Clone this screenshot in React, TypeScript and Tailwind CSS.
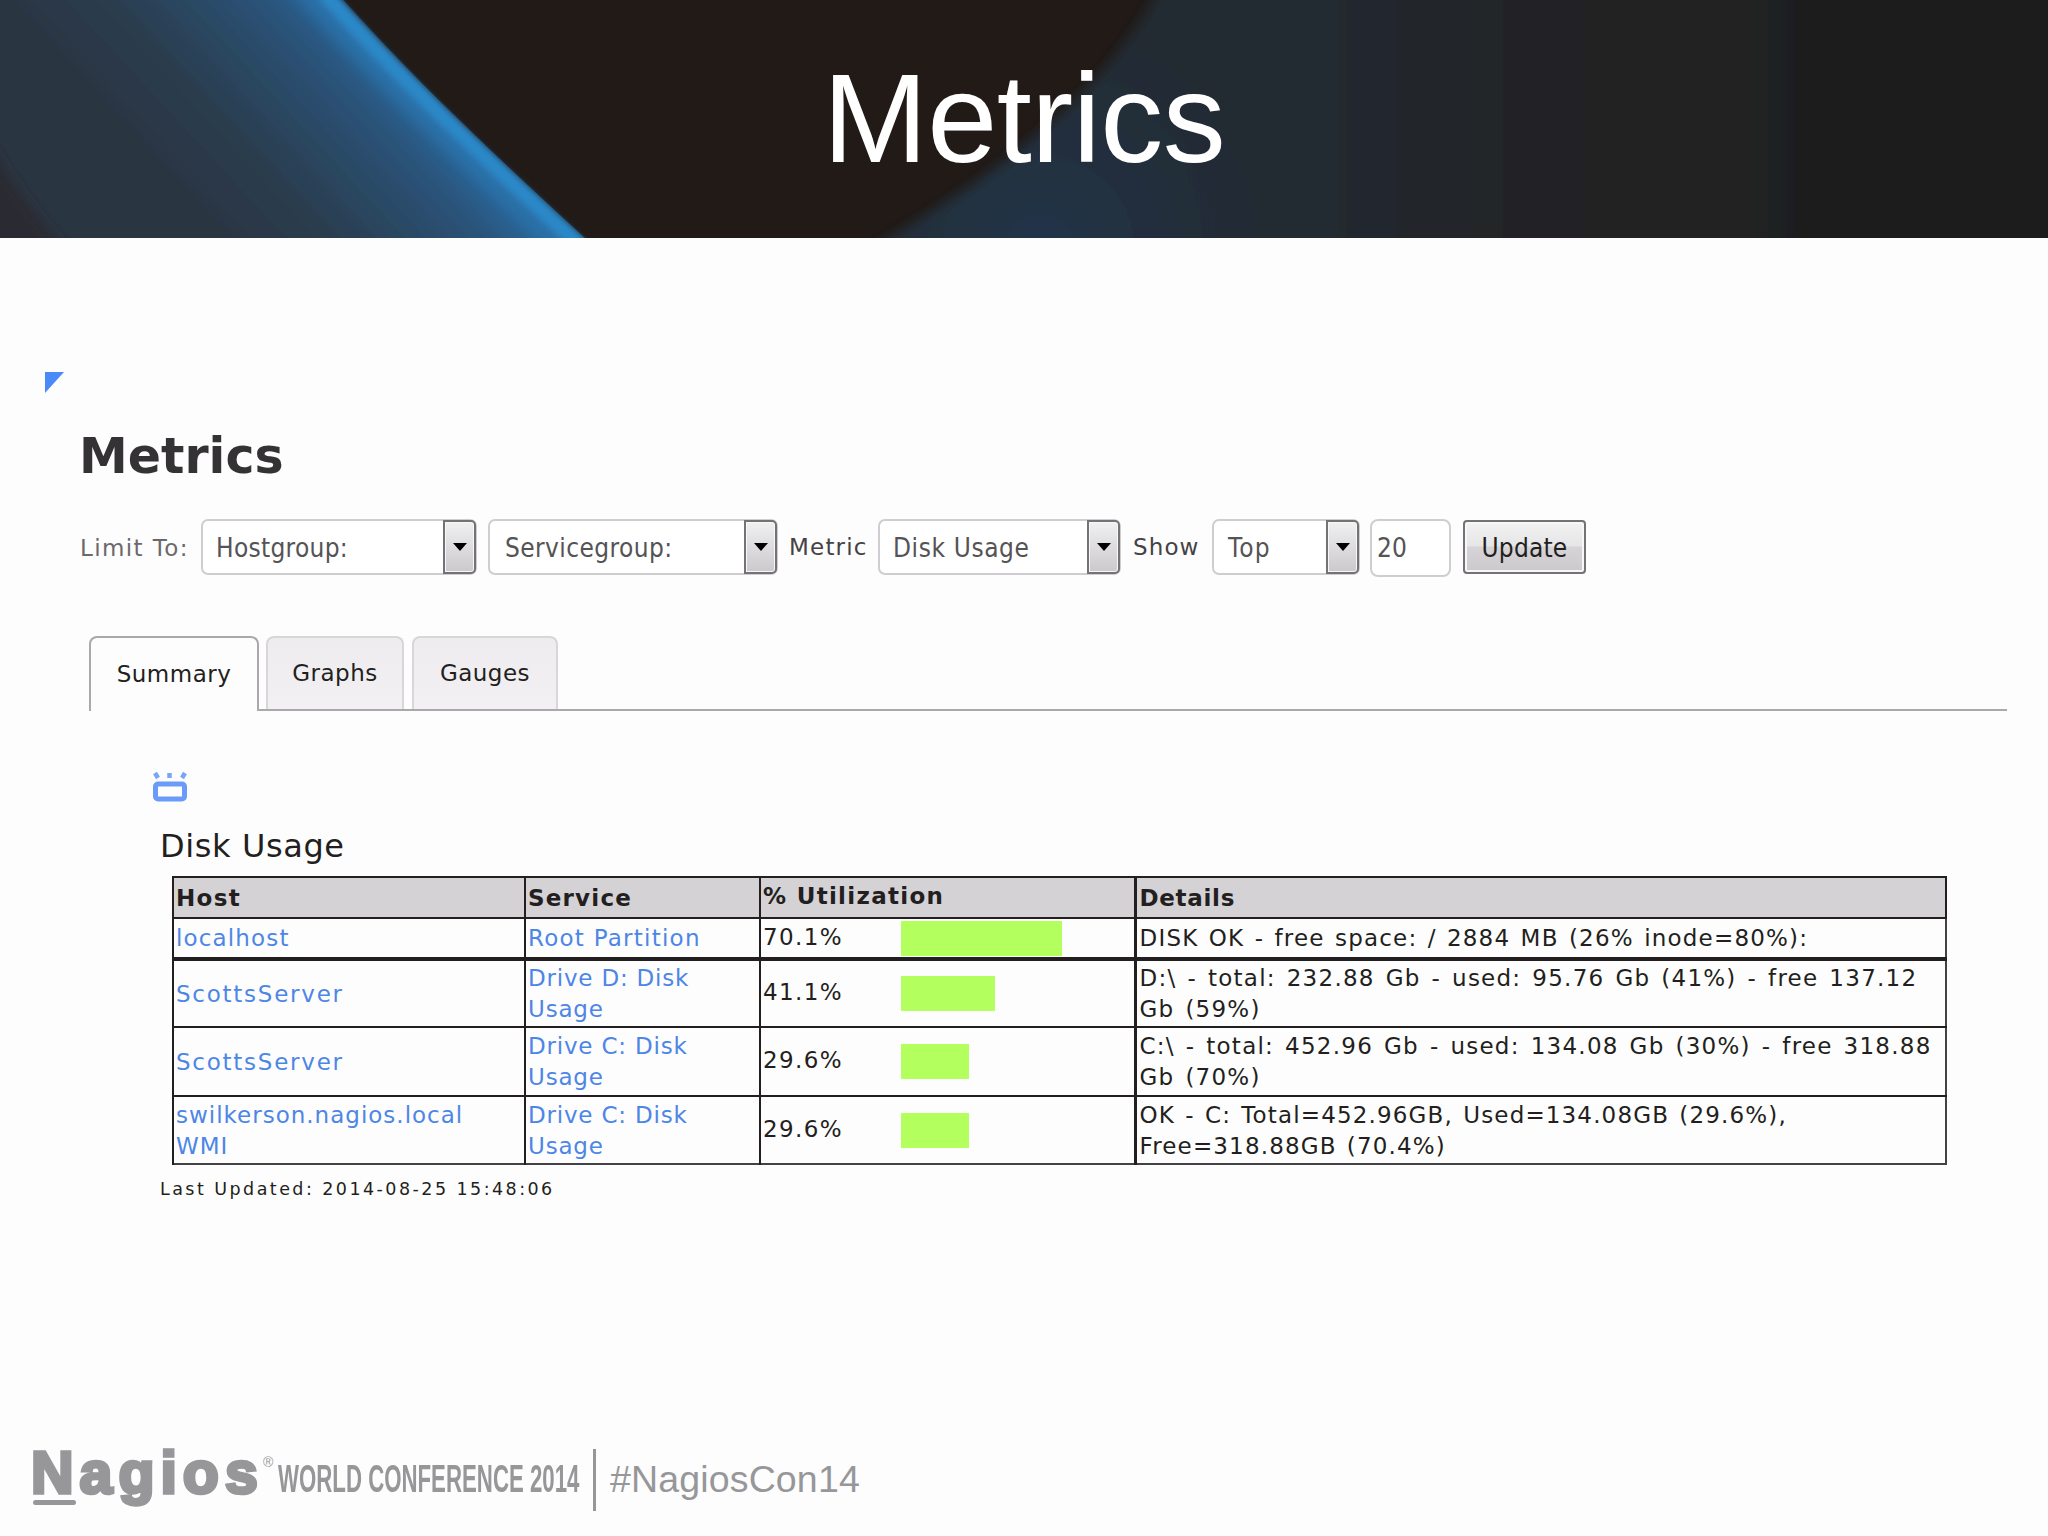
import React from 'react';

const rows = [
  {
    host: ['localhost'],
    hostTracking: 'tracking-[1.15px]',
    service: ['Root Partition'],
    serviceTracking: 'tracking-[1.25px]',
    value: 70.1,
    details: ['DISK OK - free space: / 2884 MB (26% inode=80%):'],
    detailsTracking: 'tracking-[1.2px] [word-spacing:1.8px]',
    height: 'h-[41px]',
  },
  {
    host: ['ScottsServer'],
    hostTracking: 'tracking-[1.75px]',
    service: ['Drive D: Disk', 'Usage'],
    serviceTracking: 'tracking-[0.8px]',
    value: 41.1,
    details: ['D:\\ - total: 232.88 Gb - used: 95.76 Gb (41%) - free 137.12', 'Gb (59%)'],
    detailsTracking: 'tracking-[1.25px] [word-spacing:2.4px]',
    height: 'h-[68px]',
  },
  {
    host: ['ScottsServer'],
    hostTracking: 'tracking-[1.75px]',
    service: ['Drive C: Disk', 'Usage'],
    serviceTracking: 'tracking-[0.8px]',
    value: 29.6,
    details: ['C:\\ - total: 452.96 Gb - used: 134.08 Gb (30%) - free 318.88', 'Gb (70%)'],
    detailsTracking: 'tracking-[1.25px] [word-spacing:2.4px]',
    height: 'h-[69px]',
  },
  {
    host: ['swilkerson.nagios.local', 'WMI'],
    hostTracking: 'tracking-[1px]',
    service: ['Drive C: Disk', 'Usage'],
    serviceTracking: 'tracking-[0.8px]',
    value: 29.6,
    details: ['OK - C: Total=452.96GB, Used=134.08GB (29.6%),', 'Free=318.88GB (70.4%)'],
    detailsTracking: 'tracking-[1.15px] [word-spacing:1.8px]',
    height: 'h-[68px]',
  },
];

const HeaderArt = () => (
  <svg className="absolute inset-0" width="2048" height="238" viewBox="0 0 2048 238">
    <defs>
      <linearGradient id="left" gradientUnits="userSpaceOnUse" x1="0" y1="0" x2="170" y2="-157">
        <stop offset="0" stopColor="#2b3542" />
        <stop offset="0.33" stopColor="#2a3c4d" />
        <stop offset="0.6" stopColor="#2a4863" />
        <stop offset="0.85" stopColor="#29547b" />
        <stop offset="1" stopColor="#2b6699" />
      </linearGradient>
      <linearGradient id="right" gradientUnits="userSpaceOnUse" x1="880" x2="2048" y1="0" y2="0">
        <stop offset="0" stopColor="#242c33" />
        <stop offset="0.35" stopColor="#242a32" />
        <stop offset="0.55" stopColor="#222426" />
        <stop offset="0.8" stopColor="#1f1f1f" />
        <stop offset="1" stopColor="#1e1e1d" />
      </linearGradient>
      <radialGradient id="glow" gradientUnits="userSpaceOnUse" cx="1040" cy="250" r="240">
        <stop offset="0" stopColor="#22395a" stopOpacity="0.6" />
        <stop offset="1" stopColor="#22354a" stopOpacity="0" />
      </radialGradient>
      <filter id="soft" x="-10%" y="-20%" width="120%" height="140%">
        <feGaussianBlur stdDeviation="6" />
      </filter>
      <filter id="edge" x="-10%" y="-20%" width="120%" height="140%">
        <feGaussianBlur stdDeviation="3" />
      </filter>
      <clipPath id="band">
        <path d="M-30 -40 H312 L326 -20 C399 65 499 160 607 258 L620 280 H-30 Z" />
      </clipPath>
    </defs>
    <rect width="2048" height="238" fill="#211a17" />
    <g filter="url(#soft)">
      <path d="M1165 -20 C1120 60 1060 140 860 255 H2100 V-20 Z" fill="url(#right)" />
      <path d="M1165 -20 C1120 60 1060 140 860 255 H1400 V-20 Z" fill="url(#glow)" />
    </g>
    <path d="M-30 -20 H322 C395 65 495 160 603 258 H-30 Z" fill="url(#left)" filter="url(#edge)" />
    <g clipPath="url(#band)">
      <path d="M302 -20 C375 65 475 160 583 258" fill="none" stroke="#2b78b2" strokeWidth="30" opacity="0.6" filter="url(#soft)" />
      <path d="M313 -20 C386 65 486 160 594 258" fill="none" stroke="#2c88c8" strokeWidth="15" filter="url(#edge)" />
    </g>
    <path d="M-30 110 Q15 195 75 260 H-30 Z" fill="#2c2b31" filter="url(#soft)" />
  </svg>
);

const Select: React.FC<{ label: string; width: string; text: string }> = ({ label, width, text }) => (
  <div className={`${width} ${text} flex h-[56px] items-center justify-between rounded-[7px] border-2 border-[#cfcdd0] bg-white`}>
    <span className="pt-[2px] font-['DejaVu_Sans_Condensed','DejaVu_Sans',sans-serif] text-[26px] leading-none text-[#555356] [font-stretch:condensed]">{label}</span>
    <span className="-mr-px flex h-[54px] w-[33px] items-center justify-center rounded-r-[5px] border-2 border-[#747276] bg-linear-to-b from-[#f1f0f1] to-[#cbc9cc] shadow-[inset_0_0_0_1px_#f7f7f7]">
      <svg width="14" height="8" viewBox="0 0 14 8">
        <path d="M0 0H14L7 8Z" fill="#000" />
      </svg>
    </span>
  </div>
);

const Lines: React.FC<{ lines: string[] }> = ({ lines }) => (
  <>
    {lines.map((line) => (
      <div key={line} className="whitespace-nowrap">{line}</div>
    ))}
  </>
);

const App: React.FC = () => {
  return (
    <div className="flex h-[1536px] w-[2048px] flex-col overflow-hidden bg-[#fdfdfd] font-['DejaVu_Sans',sans-serif] text-[#231f20]">
      <header className="relative flex h-[238px] shrink-0 justify-center">
        <HeaderArt />
        <h1 className="relative mt-[56px] font-['Liberation_Sans',sans-serif] text-[126px] leading-[126px] tracking-[-0.5px] text-white">Metrics</h1>
      </header>

      <main className="flex h-[1202px] shrink-0 flex-col">
        <svg className="mt-[134px] ml-[45px]" width="19" height="21" viewBox="0 0 19 21">
          <path d="M0 0H19L0 21Z" fill="#4a8af8" />
        </svg>

        <h2 className="mt-[39px] ml-[79px] text-[49px] leading-[50px] font-bold text-[#343235]">Metrics</h2>

        <div className="mt-[37px] ml-[79px] flex h-[58px] items-start text-[23px] leading-[56px]">
          <span className="w-[122px] pt-px pl-px tracking-[1.4px] text-[#6b696c]">Limit To:</span>
          <Select label="Hostgroup:" width="w-[276px]" text="pl-[13px] tracking-[0.3px]" />
          <div className="w-[11px]" />
          <Select label="Servicegroup:" width="w-[290px]" text="pl-[15px] tracking-[0.4px]" />
          <span className="-mt-px w-[100px] pt-px pl-[11px] tracking-[1.2px] text-[#444245]">Metric</span>
          <Select label="Disk Usage" width="w-[243px]" text="pl-[13px] tracking-[0.6px]" />
          <span className="-mt-px w-[91px] pt-px pl-[12px] tracking-[1.1px] text-[#444245]">Show</span>
          <Select label="Top" width="w-[148px]" text="pl-[14px] tracking-[1.3px]" />
          <div className="ml-[10px] flex h-[58px] w-[81px] items-center rounded-[8px] border-2 border-[#cfcdd0] bg-white pl-[5px] font-['DejaVu_Sans_Condensed','DejaVu_Sans',sans-serif] text-[26px] text-[#555356] [font-stretch:condensed]">20</div>
          <button className="mt-px ml-[12px] h-[54px] w-[123px] rounded-[4px] border-2 border-[#747276] bg-[linear-gradient(#f3f2f3,#e6e5e7_48%,#d6d4d7_50%,#cbc9cc)] pt-[2px] font-['DejaVu_Sans_Condensed','DejaVu_Sans',sans-serif] text-[26px] leading-none tracking-[0.2px] text-[#231f20] shadow-[inset_0_0_0_2px_#f7f7f7] [font-stretch:condensed]">Update</button>
        </div>

        <div className="mt-[59px] ml-[89px] flex h-[75px] text-[23px] tracking-[0.5px]">
          <div className="flex w-[170px] items-center justify-center rounded-t-[8px] border-2 border-b-0 border-[#aaa8ab] bg-[#fdfdfd]">Summary</div>
          <div className="flex w-[1748px] gap-[8px] border-b-2 border-[#aaa8ab] pl-[7px]">
            <div className="flex w-[138px] items-center justify-center rounded-t-[8px] border-2 border-b-0 border-[#d8d6d9] bg-linear-to-b from-[#eeecef] to-[#f2f0f3]">Graphs</div>
            <div className="flex w-[146px] items-center justify-center rounded-t-[8px] border-2 border-b-0 border-[#d8d6d9] bg-linear-to-b from-[#eeecef] to-[#f2f0f3]">Gauges</div>
          </div>
        </div>

        <svg className="mt-[60px] ml-[152px]" width="36" height="32" viewBox="0 0 36 32">
          <rect x="3.5" y="13" width="29" height="15" rx="2.5" fill="none" stroke="#6a9bf8" strokeWidth="5" />
          <path d="M3 2L6 7M17.500 2V7M33 2L30 7" fill="none" stroke="#79a5f9" strokeWidth="4.500" />
        </svg>

        <h3 className="mt-[24px] ml-[160px] text-[32px] leading-[38px] tracking-[0.6px]">Disk Usage</h3>

        <table className="mt-[11px] ml-[172px] w-[1775px] table-fixed border-collapse border-2 border-[#454246] text-[23px] leading-[31px] tracking-[0.7px]">
          <colgroup>
            <col className="w-[352px]" />
            <col className="w-[235px]" />
            <col className="w-[375px]" />
            <col />
          </colgroup>
          <thead>
            <tr className="h-[41px] bg-[#d5d2d6] text-left text-[23px]">
              <th className="border-2 border-[#231f20] p-0 pt-[2px] pl-[2px] font-bold tracking-[1.3px]">Host</th>
              <th className="border-2 border-[#231f20] p-0 pt-[2px] pl-[2px] font-bold tracking-[1.2px]">Service</th>
              <th className="border-2 border-r-[3px] border-[#231f20] p-0 pb-[2px] pl-[2px] font-bold tracking-[1.3px]">% Utilization</th>
              <th className="border-2 border-[#231f20] p-0 pt-[2px] pl-[3px] font-bold">Details</th>
            </tr>
          </thead>
          <tbody>
            {rows.map((row, i) => (
              <tr key={i} className={`${row.height} ${i === 0 ? 'border-b-[4px] border-[#231f20]' : ''}`}>
                <td className={`${row.hostTracking} border-x-2 border-t-2 border-[#231f20] p-0 pt-px pl-[2px] text-[#4d86e6]`}><Lines lines={row.host} /></td>
                <td className={`${row.serviceTracking} border-x-2 border-t-2 border-[#231f20] p-0 pt-px pl-[2px] text-[#4d86e6]`}><Lines lines={row.service} /></td>
                <td className="border-t-2 border-r-[3px] border-[#231f20] p-0 pl-[2px] tracking-[1.4px]">
                  <div className="flex items-center">
                    <span className="w-[138px] pb-[2px]">{row.value}%</span>
                    <span className="h-[35px] bg-[#b3ff5e]" style={{ width: Math.round(row.value * 2.29) }} />
                  </div>
                </td>
                <td className={`${row.detailsTracking} border-t-2 border-[#231f20] p-0 pt-px pl-[3px]`}><Lines lines={row.details} /></td>
              </tr>
            ))}
          </tbody>
        </table>

        <p className="mt-[13px] ml-[160px] text-[17.500px] leading-[22px] tracking-[2.45px]">Last Updated: 2014-08-25 15:48:06</p>
      </main>

      <footer className="flex h-[96px] shrink-0 items-start font-['Liberation_Sans',sans-serif] text-[#97979a]">
        <div className="relative ml-[31px] h-[70px] w-[230px] text-[59px] leading-[66px] font-bold tracking-[6px] [-webkit-text-stroke:3.500px_#97979a]">
          Nagios
          <div className="absolute top-[60px] left-[2px] h-[5px] w-[43px] rounded-full bg-[#97979a]" />
        </div>
        <span className="mt-[14px] ml-[2px] w-[15px] text-[14px] leading-[16px]">®</span>
        <div className="mt-[17px] w-[315px]">
          <span className="block w-max origin-left scale-x-[0.585] text-[38px] leading-[44px] font-bold">WORLD CONFERENCE 2014</span>
        </div>
        <div className="mt-[9px] h-[62px] w-[3px] bg-[#97979a]" />
        <span className="mt-[17px] ml-[14px] text-[37.500px] leading-[44px] tracking-[0.15px]">#NagiosCon14</span>
      </footer>
    </div>
  );
};

export default App;
